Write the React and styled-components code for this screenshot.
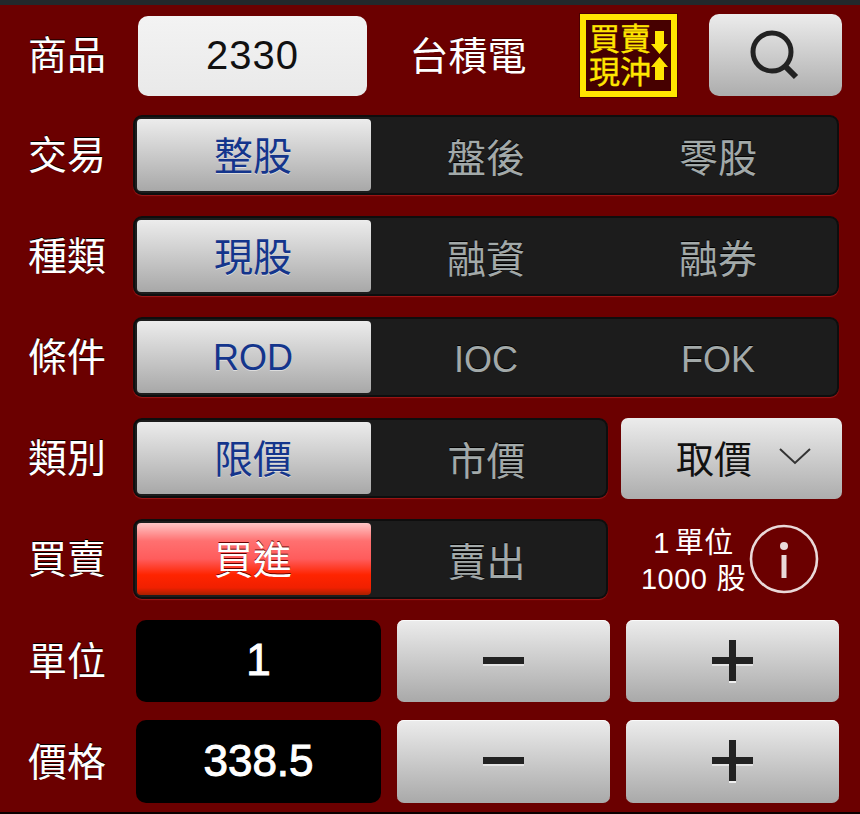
import React from 'react';
import styled, { createGlobalStyle } from 'styled-components';

const FONT = '"Liberation Sans", "Noto Sans CJK TC", sans-serif';

const GlobalStyle = createGlobalStyle`
  html, body {
    margin: 0;
    padding: 0;
    background: #6b0000;
  }
  body {
    font-family: ${FONT};
  }
`;

const SearchIcon = () => (
  <svg width="50" height="52" viewBox="0 0 50 52" fill="none">
    <circle cx="23" cy="23" r="19" stroke="#222" strokeWidth="5" />
    <path d="M37 38 L47 48" stroke="#222" strokeWidth="6" />
  </svg>
);

const Chevron = () => (
  <svg width="32" height="18" viewBox="0 0 32 18" fill="none">
    <path d="M1 2 L16 16 L31 2" stroke="#333" strokeWidth="2" />
  </svg>
);

const InfoIcon = () => (
  <svg width="70" height="70" viewBox="0 0 70 70" fill="none">
    <circle cx="35" cy="35" r="33" stroke="#ead9d9" strokeWidth="2.6" />
    <circle cx="35" cy="22" r="4" fill="#ead9d9" />
    <rect x="32.5" y="31" width="5" height="23" fill="#ead9d9" />
  </svg>
);

const StepIcon = ({ plus }) => (
  <svg width="41" height="43" viewBox="0 0 41 43">
    {plus && <rect x="17" y="1" width="7" height="42" fill="#eee" />}
    <rect x="0" y="18" width="41" height="8" fill="#e4e4e4" />
    {plus && <rect x="17" y="0" width="7" height="41" fill="#222" />}
    <rect x="0" y="17" width="41" height="7" fill="#222" />
  </svg>
);

const Arrow = ({ up }) => (
  <svg width="17" height="23" viewBox="0 0 17 23">
    <path
      d={up ? 'M8.5 0 L17 10 L13 10 L13 23 L4 23 L4 10 L0 10 Z' : 'M4 0 L13 0 L13 13 L17 13 L8.5 23 L0 13 L4 13 Z'}
      fill="#ffe600"
    />
  </svg>
);

const Segmented = ({ items, active = 0, buy, latin }) => (
  <Segment $count={items.length}>
    {items.map((item, i) => (
      <SegmentItem key={item} $active={i === active} $buy={buy} $latin={latin}>
        {item}
      </SegmentItem>
    ))}
  </Segment>
);

const App = () => (
  <Page>
    <GlobalStyle />
    <Row $height={82}>
      <Label>商品</Label>
      <CodeInput>2330</CodeInput>
      <StockName>台積電</StockName>
      <Badge>
        <BadgeText>
          <span>買賣</span>
          <span>現沖</span>
        </BadgeText>
        <BadgeArrows>
          <Arrow />
          <Arrow up />
        </BadgeArrows>
      </Badge>
      <SearchButton>
        <SearchIcon />
      </SearchButton>
    </Row>

    <Row $top={19}>
      <Label>交易</Label>
      <Segmented items={['整股', '盤後', '零股']} />
    </Row>
    <Row>
      <Label>種類</Label>
      <Segmented items={['現股', '融資', '融券']} />
    </Row>
    <Row>
      <Label>條件</Label>
      <Segmented items={['ROD', 'IOC', 'FOK']} latin />
    </Row>
    <Row>
      <Label>類別</Label>
      <Segmented items={['限價', '市價']} />
      <PriceSelect>
        <span>取價</span>
        <Chevron />
      </PriceSelect>
    </Row>
    <Row>
      <Label>買賣</Label>
      <Segmented items={['買進', '賣出']} buy />
      <UnitInfo>
        <UnitText>
          <UnitLine $gap={5}>
            <span>1</span>
            <span>單位</span>
          </UnitLine>
          <UnitLine $gap={9}>
            <span>1000</span>
            <span>股</span>
          </UnitLine>
        </UnitText>
        <InfoIcon />
      </UnitInfo>
    </Row>

    <Row $height={82}>
      <Label>單位</Label>
      <ValueBox>1</ValueBox>
      <StepButton>
        <StepIcon />
      </StepButton>
      <StepButton>
        <StepIcon plus />
      </StepButton>
    </Row>
    <Row $height={83} $top={18}>
      <Label>價格</Label>
      <ValueBox>338.5</ValueBox>
      <StepButton>
        <StepIcon />
      </StepButton>
      <StepButton>
        <StepIcon plus />
      </StepButton>
    </Row>
  </Page>
);

export default App;

const Page = styled.div`
  box-sizing: border-box;
  width: 860px;
  height: 814px;
  padding-top: 9px;
  overflow: hidden;
  display: flex;
  flex-direction: column;
  background: #6b0000;
  border-top: 5px solid #23282b;
  border-bottom: 2px solid #0c0000;
`;

const Row = styled.div`
  flex: none;
  display: flex;
  align-items: stretch;
  height: ${p => p.$height || 80}px;
  margin-top: ${p => (p.$top === undefined ? 21 : p.$top)}px;
  padding-left: 28px;

  &:first-child {
    margin-top: 0;
  }
`;

const Label = styled.div`
  flex: none;
  box-sizing: border-box;
  width: 105px;
  padding-bottom: 6px;
  display: flex;
  align-items: center;
  color: #fff;
  font-size: 39px;
  text-shadow: 0 -1px 0 #000;
`;

const CodeInput = styled.div`
  flex: none;
  box-sizing: border-box;
  width: 229px;
  height: 80px;
  margin: 2px 0 0 5px;
  padding-bottom: 2px;
  display: flex;
  align-items: center;
  justify-content: center;
  border-radius: 10px;
  background: linear-gradient(#f3f3f3, #e9e9e9);
  color: #111;
  font-size: 40px;
  letter-spacing: 1px;
`;

const StockName = styled.div`
  flex: none;
  box-sizing: border-box;
  width: 213px;
  padding: 0 11px 4px 0;
  display: flex;
  align-items: center;
  justify-content: center;
  color: #fff;
  font-size: 39px;
  text-shadow: 0 -1px 0 #400;
`;

const Badge = styled.div`
  flex: none;
  box-sizing: border-box;
  width: 97px;
  height: 83px;
  display: flex;
  align-items: center;
  justify-content: center;
  border: 6px solid #ffe600;
  outline: 1px solid #4a0000;
  background: #460000;
  color: #ffe600;
`;

const BadgeText = styled.div`
  display: flex;
  flex-direction: column;
  font-size: 31px;
  line-height: 33px;
  -webkit-text-stroke: 0.4px #ffe600;
  white-space: nowrap;
`;

const BadgeArrows = styled.div`
  display: flex;
  flex-direction: column;
  gap: 3px;
`;

const SearchButton = styled.div`
  flex: none;
  box-sizing: border-box;
  width: 133px;
  margin-left: 32px;
  padding-right: 3px;
  display: flex;
  align-items: center;
  justify-content: center;
  border-radius: 10px;
  background: linear-gradient(#ececec, #adadad);
`;

const Segment = styled.div`
  flex: none;
  box-sizing: border-box;
  width: ${p => (p.$count === 3 ? 706 : 475)}px;
  padding: 2px;
  display: grid;
  grid-template-columns: 234px repeat(${p => p.$count - 1}, 1fr);
  background: #1c1c1c;
  border: 2px solid #0e0e0e;
  border-radius: 9px;
  box-shadow: 0 1px 1px rgba(255, 70, 70, 0.35);
`;

const SegmentItem = styled.div`
  display: flex;
  align-items: center;
  justify-content: center;
  border-radius: 4px;
  font-size: ${p => (p.$latin ? 36 : 39)}px;
  padding: ${p => {
    if (p.$latin) return p.$active ? '1px 2px 0 0' : '5px 2px 0 0';
    return p.$active ? '0 2px 5px 0' : '0 2px 1px 0';
  }};
  color: ${p => (p.$active ? (p.$buy ? '#fff' : '#14358c') : '#a2a9a9')};
  text-shadow: ${p => (p.$active ? (p.$buy ? '0 -1px 0 #600' : '0 1px 0 #ddd') : '0 -1px 0 #000')};
  background: ${p => {
    if (!p.$active) return 'transparent';
    if (p.$buy) return 'linear-gradient(#ffc6c6 0%, #ff7070 25%, #ff5c5c 50%, #ff2400 72%, #f02000 90%, #a82000 100%)';
    return 'linear-gradient(#ececec, #a8a8a8)';
  }};
`;

const PriceSelect = styled.div`
  flex: none;
  box-sizing: border-box;
  width: 221px;
  height: 81px;
  margin-left: 13px;
  padding: 0 0 5px 55px;
  display: flex;
  align-items: center;
  gap: 27px;
  border-radius: 7px;
  background: linear-gradient(#ececec, #adadad);
  color: #111;
  font-size: 38px;
`;

const UnitInfo = styled.div`
  flex: none;
  width: 220px;
  margin-left: 17px;
  display: flex;
  align-items: center;
`;

const UnitText = styled.div`
  box-sizing: border-box;
  width: 111px;
  margin-left: 13px;
  padding-top: 4px;
  display: flex;
  flex-direction: column;
  align-items: center;
  color: #fff;
  font-size: 29px;
  line-height: 36px;
  white-space: nowrap;
`;

const UnitLine = styled.div`
  display: flex;
  gap: ${p => p.$gap}px;
  letter-spacing: 0.5px;
`;

const ValueBox = styled.div`
  flex: none;
  box-sizing: border-box;
  width: 245px;
  margin-left: 3px;
  padding-bottom: 2px;
  display: flex;
  align-items: center;
  justify-content: center;
  border-radius: 10px;
  background: #000;
  color: #fff;
  font-size: 44px;
  -webkit-text-stroke: 1px #fff;
`;

const StepButton = styled.div`
  flex: none;
  width: 213px;
  margin-left: 16px;
  display: flex;
  align-items: center;
  justify-content: center;
  border-radius: 7px;
  background: linear-gradient(#ececec, #a9a9a9);
  box-shadow: inset 0 1px 0 #fafafa;
`;
